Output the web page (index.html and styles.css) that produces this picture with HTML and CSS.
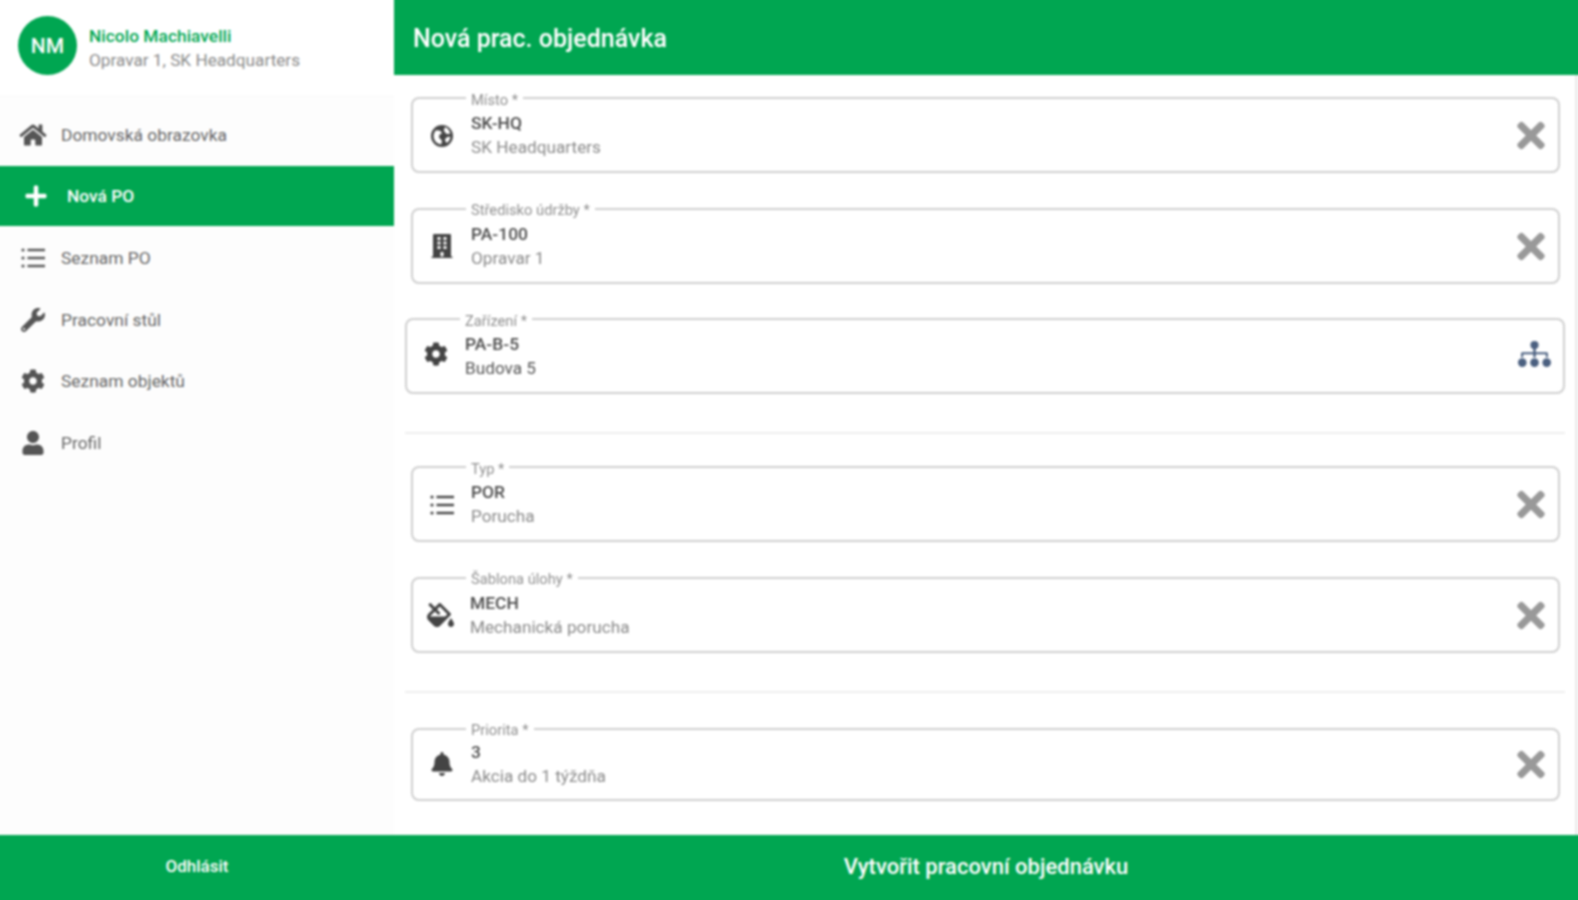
FILE: index.html
```html
<!DOCTYPE html>
<html lang="cs">
<head>
    <meta charset="UTF-8">
    <meta name="viewport" content="width=device-width, initial-scale=1.0">
    <title>Nová prac. objednávka</title>
    <link rel="stylesheet" href="styles.css">
</head>
<body>
    <svg class="icon-defs" xmlns="http://www.w3.org/2000/svg">
        <symbol id="i-home" viewBox="0 0 576 512"><path d="M280.37 148.26L96 300.11V464a16 16 0 0 0 16 16l112.06-.29a16 16 0 0 0 15.92-16V368a16 16 0 0 1 16-16h64a16 16 0 0 1 16 16v95.64a16 16 0 0 0 16 16.05L464 480a16 16 0 0 0 16-16V300L295.67 148.26a12.19 12.19 0 0 0-15.3 0zM571.6 251.47L488 182.56V44.05a12 12 0 0 0-12-12h-56a12 12 0 0 0-12 12v72.61L318.47 43a48 48 0 0 0-61 0L4.34 251.47a12 12 0 0 0-1.6 16.9l25.5 31A12 12 0 0 0 45.15 301l235.22-193.74a12.19 12.19 0 0 1 15.3 0L530.9 301a12 12 0 0 0 16.9-1.6l25.5-31a12 12 0 0 0-1.7-16.93z"/></symbol>
        <symbol id="i-plus" viewBox="0 0 448 512"><path d="M416 208H272V64c0-17.67-14.33-32-32-32h-32c-17.67 0-32 14.33-32 32v144H32c-17.67 0-32 14.33-32 32v32c0 17.67 14.33 32 32 32h144v144c0 17.67 14.33 32 32 32h32c17.67 0 32-14.33 32-32V304h144c17.67 0 32-14.33 32-32v-32c0-17.67-14.33-32-32-32z"/></symbol>
        <symbol id="i-list" viewBox="0 0 24 24"><circle cx="2" cy="4" r="1.6"/><circle cx="2" cy="12" r="1.6"/><circle cx="2" cy="20" r="1.6"/><rect x="6.5" y="2.800" width="17.5" height="2.4"/><rect x="6.5" y="10.800" width="17.5" height="2.4"/><rect x="6.5" y="18.800" width="17.5" height="2.4"/></symbol>
        <symbol id="i-wrench" viewBox="0 0 512 512"><path d="M507.73 109.1c-2.24-9.03-13.54-12.09-20.12-5.51l-74.36 74.36-67.88-11.31-11.31-67.88 74.36-74.36c6.62-6.62 3.43-17.9-5.66-20.16-47.38-11.74-99.55.91-136.58 37.93-39.64 39.64-50.55 97.1-34.05 147.2L18.74 402.76c-24.99 24.99-24.99 65.51 0 90.5 24.99 24.99 65.51 24.99 90.5 0l213.21-213.21c50.12 16.71 107.47 5.68 147.37-34.22 37.07-37.07 49.7-89.32 37.91-136.73zM64 472c-13.25 0-24-10.75-24-24 0-13.26 10.75-24 24-24s24 10.74 24 24c0 13.25-10.75 24-24 24z"/></symbol>
        <symbol id="i-cog" viewBox="0 0 512 512"><path d="M487.4 315.7l-42.6-24.6c4.3-23.2 4.3-47 0-70.2l42.6-24.6c4.9-2.8 7.1-8.6 5.5-14-11.1-35.6-30-67.8-54.7-94.6-3.8-4.1-10-5.1-14.8-2.3L380.8 110c-17.9-15.4-38.5-27.3-60.8-35.1V25.8c0-5.6-3.9-10.5-9.4-11.7-36.7-8.2-74.3-7.8-109.2 0-5.5 1.2-9.4 6.1-9.4 11.7V75c-22.2 7.9-42.8 19.8-60.8 35.1L88.7 85.5c-4.9-2.8-11-1.9-14.8 2.3-24.7 26.7-43.6 58.9-54.7 94.6-1.7 5.4.6 11.2 5.5 14L67.3 221c-4.3 23.2-4.3 47 0 70.2l-42.6 24.6c-4.9 2.8-7.1 8.6-5.5 14 11.1 35.6 30 67.8 54.7 94.6 3.8 4.1 10 5.1 14.8 2.3l42.6-24.6c17.9 15.4 38.5 27.3 60.8 35.1v49.2c0 5.6 3.9 10.5 9.4 11.7 36.7 8.2 74.3 7.8 109.2 0 5.5-1.2 9.4-6.1 9.4-11.7v-49.2c22.2-7.9 42.8-19.8 60.8-35.1l42.6 24.6c4.9 2.8 11 1.9 14.8-2.3 24.7-26.7 43.6-58.9 54.7-94.6 1.5-5.5-.7-11.3-5.6-14.1zM256 336c-44.1 0-80-35.9-80-80s35.9-80 80-80 80 35.9 80 80-35.9 80-80 80z"/></symbol>
        <symbol id="i-user" viewBox="0 0 448 512"><path d="M224 256c70.7 0 128-57.3 128-128S294.7 0 224 0 96 57.3 96 128s57.3 128 128 128zm89.6 32h-16.7c-22.2 10.2-46.9 16-72.9 16s-50.6-5.8-72.9-16h-16.7C60.2 288 0 348.2 0 422.4V464c0 26.5 21.5 48 48 48h352c26.5 0 48-21.5 48-48v-41.6c0-74.2-60.2-134.4-134.4-134.4z"/></symbol>
        <symbol id="i-globe" viewBox="0 0 24 24"><path fill-rule="evenodd" d="M12 1a11 11 0 1 0 0 22 11 11 0 0 0 0-22zm-8.4 11c0-2.200.9-4.300 2.300-5.800l4.400.5 1.700 2.600-2.600 1.500-.4 2.700 3 3.200-.8 3.700C6.800 20 3.600 16.400 3.600 12zm13 7.100-1.900-3.300 2.400-2.800 3.300-.3c-.3 2.700-1.700 5-3.800 6.400zm3.700-9.300-3.800.2-2.800-3.600 1.400-3.500c2.600.9 4.600 3.400 5.200 6.900z"/></symbol>
        <symbol id="i-building" viewBox="0 0 448 512"><path d="M436 480h-20V24c0-13.255-10.745-24-24-24H56C42.745 0 32 10.745 32 24v456H12c-6.627 0-12 5.373-12 12v20h448v-20c0-6.627-5.373-12-12-12zM128 76c0-6.627 5.373-12 12-12h40c6.627 0 12 5.373 12 12v40c0 6.627-5.373 12-12 12h-40c-6.627 0-12-5.373-12-12V76zm0 96c0-6.627 5.373-12 12-12h40c6.627 0 12 5.373 12 12v40c0 6.627-5.373 12-12 12h-40c-6.627 0-12-5.373-12-12v-40zm52 148h-40c-6.627 0-12-5.373-12-12v-40c0-6.627 5.373-12 12-12h40c6.627 0 12 5.373 12 12v40c0 6.627-5.373 12-12 12zm76 160h-64v-84c0-6.627 5.373-12 12-12h40c6.627 0 12 5.373 12 12v84zm64-172c0 6.627-5.373 12-12 12h-40c-6.627 0-12-5.373-12-12v-40c0-6.627 5.373-12 12-12h40c6.627 0 12 5.373 12 12v40zm0-96c0 6.627-5.373 12-12 12h-40c-6.627 0-12-5.373-12-12v-40c0-6.627 5.373-12 12-12h40c6.627 0 12 5.373 12 12v40zm0-96c0 6.627-5.373 12-12 12h-40c-6.627 0-12-5.373-12-12V76c0-6.627 5.373-12 12-12h40c6.627 0 12 5.373 12 12v40z"/></symbol>
        <symbol id="i-fill" viewBox="0 0 576 512"><path d="M512 320s-64 92.65-64 128c0 35.35 28.66 64 64 64s64-28.65 64-64-64-128-64-128zm-9.37-102.94L294.94 9.37C288.69 3.12 280.5 0 272.31 0s-16.38 3.12-22.62 9.37l-81.58 81.58L81.93 4.76c-6.25-6.25-16.38-6.25-22.62 0L36.69 27.38c-6.24 6.25-6.24 16.38 0 22.62l86.19 86.18-94.76 94.76c-37.49 37.48-37.49 98.26 0 135.75l117.19 117.19c18.74 18.74 43.31 28.12 67.87 28.12 24.57 0 49.13-9.37 67.87-28.12l221.57-221.57c12.5-12.5 12.5-32.75.01-45.25zm-116.22 70.97H65.93c1.36-3.84 3.57-7.98 7.43-11.83l13.15-13.15 81.61-81.61 58.6 58.6c12.49 12.49 32.75 12.49 45.24 0s12.49-32.75 0-45.24l-58.6-58.6 58.95-58.95 162.44 162.44-48.34 48.34z"/></symbol>
        <symbol id="i-bell" viewBox="0 0 448 512"><path d="M224 512c35.32 0 63.97-28.65 63.97-64H160.03c0 35.35 28.65 64 63.97 64zm215.39-149.71c-19.32-20.76-55.47-51.99-55.47-154.29 0-77.7-54.48-139.9-127.94-155.16V32c0-17.67-14.32-32-31.98-32s-31.98 14.33-31.98 32v20.84C118.56 68.1 64.08 130.3 64.08 208c0 102.3-36.15 133.53-55.47 154.29-6 6.45-8.66 14.16-8.61 21.71.11 16.4 12.98 32 32.1 32h383.8c19.12 0 32-15.6 32.1-32 .05-7.55-2.61-15.27-8.61-21.71z"/></symbol>
        <symbol id="i-times" viewBox="0 70 352 372"><path d="M242.72 256l100.07-100.07c12.28-12.28 12.28-32.19 0-44.48l-22.24-22.24c-12.28-12.28-32.19-12.28-44.48 0L176 189.28 75.93 89.21c-12.28-12.28-32.19-12.28-44.48 0L9.21 111.45c-12.28 12.28-12.28 32.19 0 44.48L109.28 256 9.21 356.07c-12.28 12.28-12.28 32.19 0 44.48l22.24 22.24c12.28 12.28 32.2 12.28 44.48 0L176 322.72l100.07 100.07c12.28 12.28 32.2 12.28 44.48 0l22.24-22.24c12.28-12.28 12.28-32.19 0-44.48L242.72 256z"/></symbol>
        <symbol id="i-sitemap" viewBox="0 0 640 512"><circle cx="320" cy="80" r="80"/><circle cx="80" cy="425" r="85"/><circle cx="320" cy="425" r="85"/><circle cx="560" cy="425" r="85"/><path d="M296 130h48v90h216a24 24 0 0 1 24 24v76h-40v-60H344v60h-48v-60H96v60H56v-76a24 24 0 0 1 24-24h216z"/></symbol>
    </svg>

    <div class="app">
        <aside class="sidebar">
            <div class="user-box">
                <div class="avatar">NM</div>
                <div>
                    <div class="user-name">Nicolo Machiavelli</div>
                    <div class="user-place">Opravar 1, SK Headquarters</div>
                </div>
            </div>
            <nav class="menu">
                <a class="menu-item"><svg class="menu-icon"><use href="#i-home"/></svg>Domovská obrazovka</a>
                <a class="menu-item active"><svg class="menu-icon"><use href="#i-plus"/></svg>Nová PO</a>
                <a class="menu-item"><svg class="menu-icon"><use href="#i-list"/></svg>Seznam PO</a>
                <a class="menu-item"><svg class="menu-icon"><use href="#i-wrench"/></svg>Pracovní stůl</a>
                <a class="menu-item"><svg class="menu-icon"><use href="#i-cog"/></svg>Seznam objektů</a>
                <a class="menu-item"><svg class="menu-icon"><use href="#i-user"/></svg>Profil</a>
            </nav>
        </aside>

        <main class="content">
            <header class="page-title">Nová prac. objednávka</header>
            <div class="form">
                <fieldset class="field">
                    <legend>Místo *</legend>
                    <svg class="field-icon"><use href="#i-globe"/></svg>
                    <div class="field-text"><div class="value">SK-HQ</div><div class="desc">SK Headquarters</div></div>
                    <svg class="clear"><use href="#i-times"/></svg>
                </fieldset>
                <fieldset class="field">
                    <legend>Středisko údržby *</legend>
                    <svg class="field-icon"><use href="#i-building"/></svg>
                    <div class="field-text"><div class="value">PA-100</div><div class="desc">Opravar 1</div></div>
                    <svg class="clear"><use href="#i-times"/></svg>
                </fieldset>
                <fieldset class="field wide">
                    <legend>Zařízení *</legend>
                    <svg class="field-icon"><use href="#i-cog"/></svg>
                    <div class="field-text"><div class="value">PA-B-5</div><div class="desc dark">Budova 5</div></div>
                    <svg class="tree"><use href="#i-sitemap"/></svg>
                </fieldset>
                <hr class="divider">
                <fieldset class="field">
                    <legend>Typ *</legend>
                    <svg class="field-icon"><use href="#i-list"/></svg>
                    <div class="field-text"><div class="value">POR</div><div class="desc">Porucha</div></div>
                    <svg class="clear"><use href="#i-times"/></svg>
                </fieldset>
                <fieldset class="field">
                    <legend>Šablona úlohy *</legend>
                    <svg class="field-icon fill"><use href="#i-fill"/></svg>
                    <div class="field-text"><div class="value">MECH</div><div class="desc">Mechanická porucha</div></div>
                    <svg class="clear"><use href="#i-times"/></svg>
                </fieldset>
                <hr class="divider">
                <fieldset class="field short">
                    <legend>Priorita *</legend>
                    <svg class="field-icon"><use href="#i-bell"/></svg>
                    <div class="field-text"><div class="value">3</div><div class="desc">Akcia do 1 týždňa</div></div>
                    <svg class="clear"><use href="#i-times"/></svg>
                </fieldset>
            </div>
        </main>

        <footer class="footer">
            <a class="logout">Odhlásit</a>
            <a class="submit">Vytvořit pracovní objednávku</a>
        </footer>
    </div>
</body>
</html>
```

FILE: styles.css
```css
/* Zaklad */
html, body {
    height: 100%;
    margin: 0;
}

body {
    font-family: Roboto, "Liberation Sans", sans-serif;
    background-color: #fff;
    color: #333;
    overflow: hidden;
}

.icon-defs {
    display: none;
}

/* app presahuje okno o 4px na kazde strane, jinak blur vybledne okraje */
.app {
    display: grid;
    grid-template-columns: 398px 1fr;
    grid-template-rows: 839px 69px;
    width: calc(100vw + 8px);
    height: calc(100vh + 8px);
    margin: -4px;
    filter: blur(0.8px);
}

/* Levy panel */
.sidebar {
    background-color: #fdfdfd;
}

.user-box {
    display: flex;
    align-items: center;
    gap: 12px;
    height: 101px;
    padding: 4px 0 0 22px;
    box-sizing: border-box;
    background-color: #fff;
    border-bottom: 1px solid #f8f8f8;
}

.avatar {
    width: 59px;
    height: 59px;
    margin-bottom: 5px;
    border-radius: 50%;
    background-color: #00a651;
    color: #fff;
    font-size: 21px;
    font-weight: 500;
    display: flex;
    align-items: center;
    justify-content: center;
}

.user-name {
    color: #00a651;
    font-size: 17.4px;
    font-weight: 500;
    line-height: 24px;
}

.user-place {
    color: #8a8a8a;
    font-size: 17.2px;
    line-height: 24px;
}

.menu {
    display: flex;
    flex-direction: column;
    padding-top: 7px;
}

.menu-item {
    display: flex;
    align-items: center;
    height: 61.5px;
    padding-left: 23px;
    color: #666;
    font-size: 17.4px;
}

.menu-icon {
    width: 28px;
    height: 24px;
    margin-right: 14px;
    fill: #555;
}

.menu-item.active {
    height: 60px;
    margin-bottom: 2px;
    padding-left: 26px;
    background-color: #00a651;
    color: #fff;
    font-weight: 500;
}

.menu-item.active .menu-icon {
    fill: #fff;
    margin-right: 17px;
}

/* Formular */
.content {
    display: flex;
    flex-direction: column;
    min-width: 0;
}

.page-title {
    height: 79px;
    flex: none;
    box-sizing: border-box;
    padding: 5px 0 0 19px;
    background-color: #00a651;
    color: #fff;
    font-size: 25px;
    font-weight: 500;
    line-height: 75px;
}

.form {
    flex: 1;
    display: flex;
    flex-direction: column;
    margin-right: 4px;
    padding-top: 16px;
    border-right: 3px solid #ececec;
}

.field {
    display: flex;
    align-items: center;
    min-width: 0;
    margin: 0 15px 28.67px 17px;
    padding: 7px 0 12px;
    border: 2px solid #cfcfcf;
    border-radius: 8px;
}

.field.wide {
    margin-left: 11px;
    margin-right: 10px;
}

.field.short {
    margin-top: 3px;
    padding: 5px 0 11px;
}

.field legend {
    position: relative;
    top: 1.5px;
    margin-left: 53px;
    padding: 0 5px;
    color: #8f8f8f;
    font-size: 14.7px;
    line-height: 14px;
}

.field-icon {
    width: 24px;
    height: 24px;
    flex: none;
    margin: 0 17px;
    fill: #444;
}

.field-icon.fill {
    width: 27px;
    margin: 0 16px 0 14px;
}

.field.wide .field-icon {
    margin-bottom: 6px;
}

.field-text {
    flex: 1;
}

.value {
    margin-bottom: 1px;
    color: #4d4d4d;
    font-size: 17.4px;
    font-weight: 500;
    line-height: 23px;
}

.desc {
    color: #8a8a8a;
    font-size: 17.2px;
    line-height: 23px;
}

.desc.dark {
    color: #555;
}

.clear {
    width: 28px;
    height: 29px;
    flex: none;
    margin-right: 13px;
    fill: #999;
}

.tree {
    width: 33px;
    height: 26px;
    flex: none;
    margin: 0 12px 6px 0;
    fill: #4b6080;
}

.divider {
    width: auto;
    margin: 9.33px 10px 26px 11px;
    border: none;
    border-top: 2px solid #eee;
}

/* Spodni lista */
.footer {
    grid-column: 1 / 3;
    display: grid;
    grid-template-columns: 394px 1fr;
    align-items: center;
    padding: 0 4px 7px;
    background-color: #00a651;
    color: #fff;
    text-align: center;
}

.logout {
    font-size: 17px;
    font-weight: 500;
}

.submit {
    font-size: 22px;
    font-weight: 500;
}
```
